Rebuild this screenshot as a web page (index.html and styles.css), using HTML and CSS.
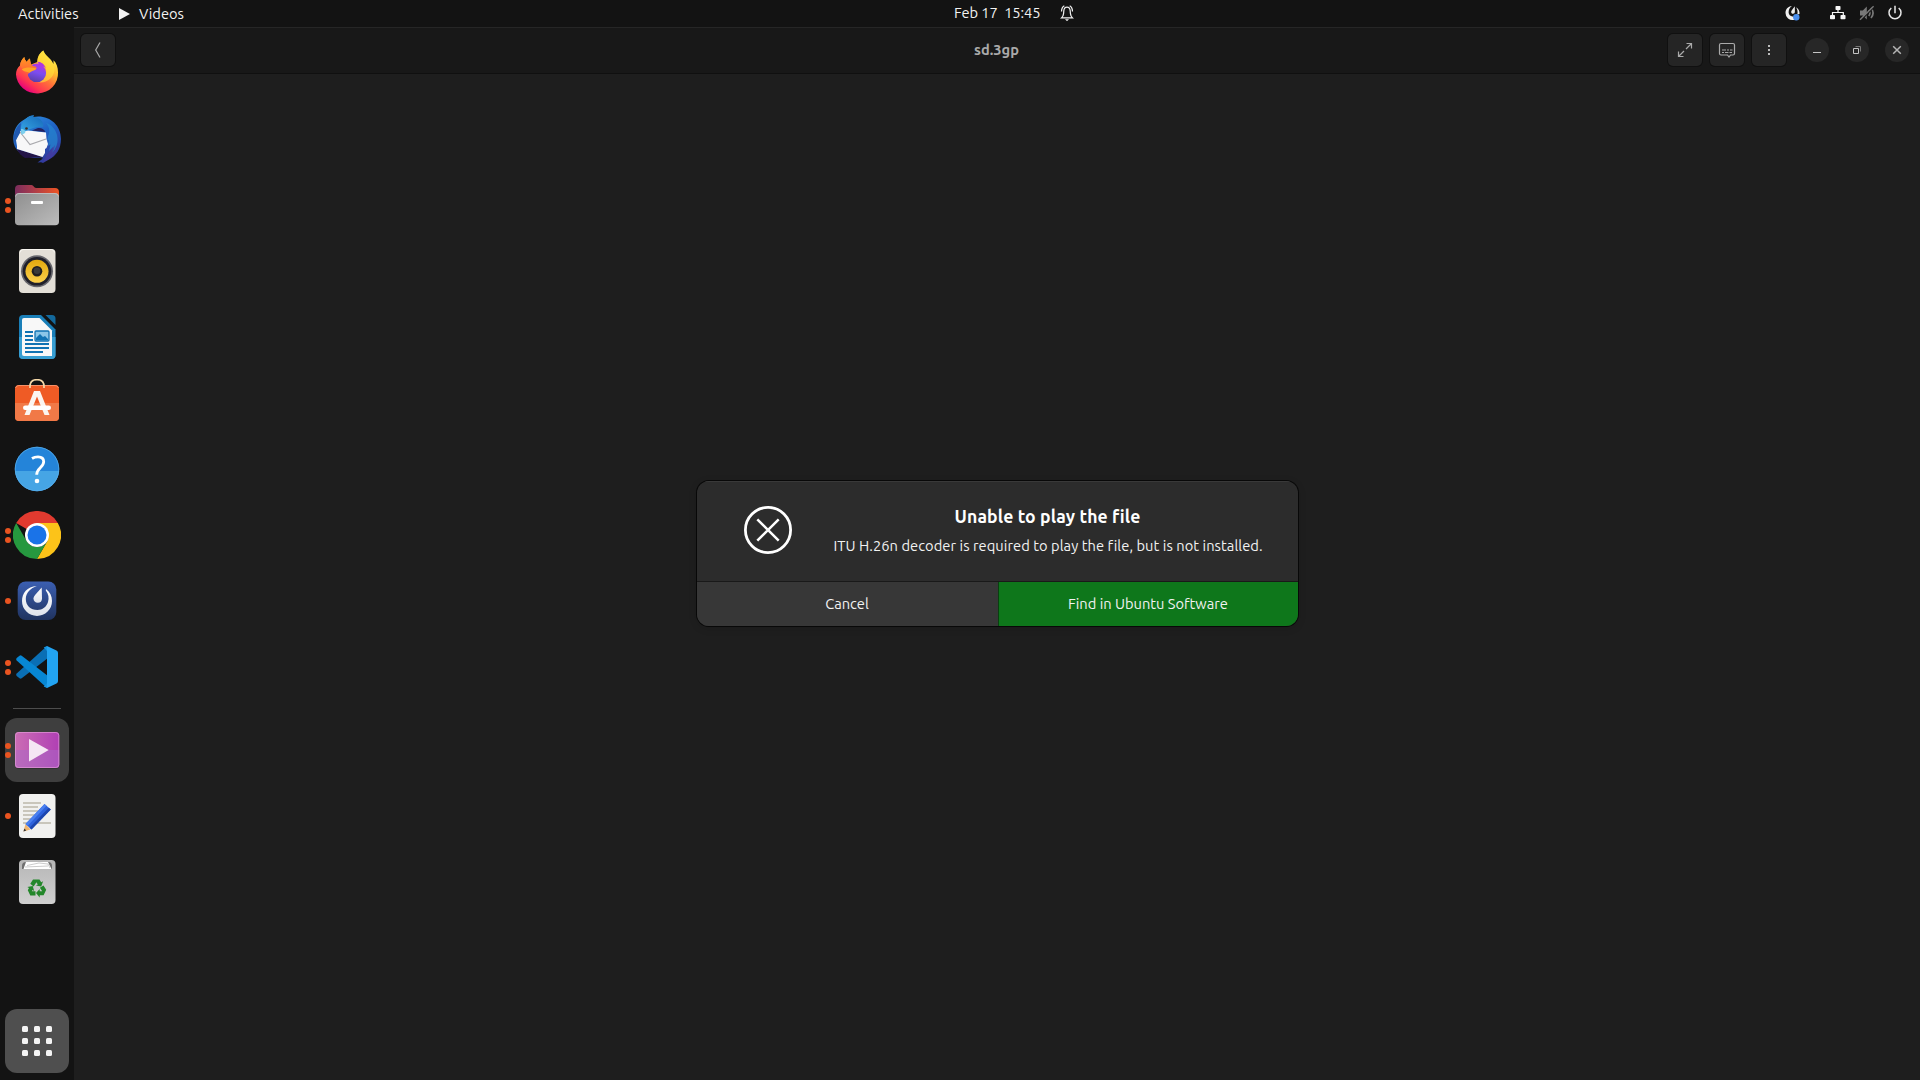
FILE: index.html
```html
<!DOCTYPE html>
<html lang="en">
<head>
<meta charset="utf-8">
<title>Videos</title>
<link rel="stylesheet" href="styles.css">
</head>
<body>
<div class="desktop">
  <header class="topbar">
    <div class="topbar-left">
      <span class="activities">Activities</span>
      <span class="app-menu">
        <svg width="11" height="12" viewBox="0 0 11 12"><path d="M0 0 11 6 0 12z" fill="#f2f2f2"/></svg>
        <span class="app-name">Videos</span>
      </span>
    </div>
    <div class="clock">
      <span class="clock-text">Feb 17&nbsp; 15:45</span>
      <svg width="14" height="16" viewBox="0 0 14 16" fill="none" stroke="#f2f2f2" stroke-width="1.200">
        <path d="M1.500 12.900c1-.9 1.900-2 2.100-4.500l.2-2.500C4 3.500 5.300 2.200 7 2.200s3 1.300 3.200 3.700l.2 2.500c.2 2.500 1.100 3.600 2.100 4.500z"/>
        <path d="M1.500 6.500C1.600 3.800 2.500 1.600 4.300.7M12.500 6.500C12.400 3.800 11.500 1.600 9.700.7"/>
        <path d="M5 14.200h4L7 16.200z" fill="#f2f2f2" stroke="none"/>
      </svg>
    </div>
    <div class="tray">
      <svg class="tray-chat" width="16" height="16" viewBox="0 0 16 16">
        <path d="M7 1C2.800 1.200.5 4.500.5 8a7 7 0 0 0 8.500 6.900L12 11C7.500 12.800 3.600 11 3.600 7.300 3.600 4.500 5 2.200 7 1z" fill="#f0f0f0"/>
        <path d="M11 2.200C13.500 3.500 14.800 6 14.500 9l-2.200.5C13 7 12.500 4.500 11 2.200z" fill="#f0f0f0"/>
        <path d="M9.800 1.300 9.900 6.600C9.900 8 9.200 8.800 8.100 8.800 6.900 8.800 6.200 7.900 6.200 6.900 6.200 6 6.700 5.400 7.200 4.800z" fill="#f0f0f0"/>
        <circle cx="11.300" cy="12.200" r="3.200" fill="#4a90f0"/>
      </svg>
      <svg class="tray-net" width="16" height="14" viewBox="0 0 16 14">
        <g fill="#f7f7f7"><rect x="5.500" y="0" width="5" height="4" rx=".8"/><rect x="0" y="9" width="5" height="4.200" rx=".8"/><rect x="10.500" y="9" width="5" height="4.200" rx=".8"/></g>
        <path d="M8 3v3.500M2.500 9.500v-3h10.800v3" fill="none" stroke="#f7f7f7" stroke-width="1.200"/>
      </svg>
      <svg class="tray-vol" width="16" height="16" viewBox="0 0 16 16">
        <path d="M1 5.500h2.800l4-4v13l-4-4H1z" fill="#787878"/>
        <path d="M9.800 5c1.300 1.800 1.300 4.200 0 6M12 3c2.500 3 2.500 7 0 10" fill="none" stroke="#787878" stroke-width="1.700"/>
        <path d="M1.800 15.200 15 2" stroke="#131313" stroke-width="1.500"/><path d="M1 14.800 14.600 1.200" stroke="#787878" stroke-width="1.400"/>
      </svg>
      <svg class="tray-power" width="16" height="16" viewBox="0 0 16 16" fill="none" stroke="#e8e8e8" stroke-width="1.500">
        <path d="M8 .8v7.400M4.300 3A6 6 0 1 0 11.700 3"/>
      </svg>
    </div>
  </header>

  <div class="workspace">
    <nav class="dock">
      <div class="dock-item">
        <svg class="app-icon" viewBox="0 0 48 48">
          <defs>
            <linearGradient id="ffBody" x1=".85" y1=".1" x2=".25" y2=".95"><stop offset="0" stop-color="#fff44f"/><stop offset=".3" stop-color="#ffbd2e"/><stop offset=".55" stop-color="#ff7139"/><stop offset=".8" stop-color="#ff3750"/><stop offset="1" stop-color="#e5007d"/></linearGradient>
            <linearGradient id="ffGlobe" x1=".7" y1="0" x2=".4" y2="1"><stop offset="0" stop-color="#b833e1"/><stop offset=".5" stop-color="#7b4df0"/><stop offset="1" stop-color="#5a3fa8"/></linearGradient>
            <linearGradient id="ffHead" x1="0" y1="0" x2="0" y2="1"><stop offset="0" stop-color="#ff9a1f"/><stop offset="1" stop-color="#ff5a3c"/></linearGradient>
          </defs>
          <path d="M30.300 1.500C25.500 5 24.500 9 24.300 13L18 15.500C17.500 13.500 17 11 17 9.500 15.500 10.500 14.500 11.500 13.800 13 12.500 11.500 11.500 10 11.300 8 8.500 10.500 7.500 13 7 16.500 4 19 3 22 3 25.500A21 20 0 0 0 45 23.500C45 18 43.500 14 40.500 11.200V15C38 9 32 6.500 30.300 1.500z" fill="url(#ffBody)"/>
          <path d="M30.300 1.500C25.500 5 24.500 9 24.300 13 31 14 34 18 33 24 32.500 29 29 32.500 24 33c9 2 17-4 17.500-12C41.500 12 32.500 9 30.300 1.500z" fill="#ffdf3a" opacity=".65"/>
          <circle cx="23.800" cy="23.800" r="9.300" fill="url(#ffGlobe)"/>
          <path d="M24.500 12.800C29 13 31 15.500 33 19 30 16.500 28 17 27 17.500z" fill="#ad35e2"/>
          <path d="M7 16.500C7.500 13 8.500 10.500 11.300 8c.2 2 1.200 3.500 2.500 5C14.500 11.500 15.500 10.500 17 9.500c0 2 .5 4.500 1.500 6.500 1.500 2 5.500.500 5 3.500-.8 1.800-4.500 1.800-6 3.300C16 24 15.500 25 14.500 25.500 11 23 9 20 7 16.500z" fill="url(#ffHead)"/>
          <path d="M8.700 20.500C12 18 18 18 23.400 19.500 22.500 21.500 18.500 21.500 16.800 23.800 13 22.500 11 22.500 8.700 20.500z" fill="#ffa426"/>
        </svg>
      </div>
      <div class="dock-item">
        <svg class="app-icon" viewBox="0 0 48 48">
          <defs><linearGradient id="tbBody" x1=".2" y1="0" x2=".7" y2="1"><stop offset="0" stop-color="#2f8fe0"/><stop offset=".45" stop-color="#1f62c4"/><stop offset="1" stop-color="#31379a"/></linearGradient>
          <linearGradient id="tbHead" x1="1" y1="0" x2="0" y2="1"><stop offset="0" stop-color="#1667b8"/><stop offset="1" stop-color="#37a9e6"/></linearGradient></defs>
          <path d="M17 1 21 .3 20 2C35-1 48 9 48 24c0 10-5 17-12 20.500L30 48l-2-.7-3.500.2 5.500-4C15 44 3 39 .7 28-1 18 3 9 10.500 5z" fill="url(#tbBody)"/>
          <path d="M4 34 30 42 12 43C8.500 41 5.500 38 4 34z" fill="#231447"/>
          <path d="M30 42.500 11 43.500 14 47H24z" fill="#131313"/>
          <path d="M7 16 15 15.500 33 17.500 33.500 24 35 29 33.500 33 32 34 32 38 29.500 42 4 34 4 31 3 25z" fill="#f7f7f8"/>
          <path d="M7 17 17 29.500 33 24" fill="none" stroke="#a9a9ad" stroke-width="1.200"/>
          <path d="M3 32 .5 24C1 16 5 10 8 8L7 18 3 25z" fill="#2059b0"/>
          <path d="M33 8C37 13 37 17 35 21l-1 5 2-1-1 6 2.500-1.500L36 36l4-4-1 6c4-4 6-10 5.500-15C44 15 38 9 33 8z" fill="#2584cf" opacity=".75"/>
          <path d="M34 40 42 30 40 38 45 31C44 38 39 44 30 47z" fill="#473aa0" opacity=".7"/>
          <path d="M8 18C7 11 10 4 17 1l4-.7L20 2C28 2 31 8 30 12 25 11 19 13 13 16z" fill="url(#tbHead)"/>
          <path d="M25 13C28 12.500 31 14 32.500 17l-9.500-1-4-.5z" fill="#23205f"/>
          <path d="M8 14C11 14 13 16 12 18L8.500 20z" fill="#7ed0ee"/>
          <circle cx="13.500" cy="13.500" r="1.300" fill="#3a2a22"/>
        </svg>
      </div>
      <div class="dock-item">
        <span class="running"><i></i><i></i></span>
        <svg class="app-icon" viewBox="0 0 48 48">
          <defs><linearGradient id="flBack" x1="0" y1="0" x2="1" y2="0"><stop offset="0" stop-color="#7a2d5c"/><stop offset=".4" stop-color="#a93b4c"/><stop offset="1" stop-color="#ee5523"/></linearGradient>
          <linearGradient id="flFront" x1="0" y1="0" x2="1" y2="1"><stop offset="0" stop-color="#8f8f8f"/><stop offset="1" stop-color="#bcbcbc"/></linearGradient></defs>
          <path d="M2 8a4 4 0 0 1 4-4h12.500c2 0 2.500 3 4.500 3h19a4 4 0 0 1 4 4v12H2z" fill="url(#flBack)"/>
          <rect x="2" y="12.200" width="44" height="32" rx="3.800" fill="url(#flFront)"/>
          <path d="M2.500 15.500a3.300 3.300 0 0 1 3.500-3h36a3.300 3.300 0 0 1 3.500 3" fill="none" stroke="#c2c2c2" stroke-width=".9"/>
          <rect x="18" y="20" width="12" height="3" rx="1" fill="#fff"/>
        </svg>
      </div>
      <div class="dock-item">
        <svg class="app-icon" viewBox="0 0 48 48">
          <defs><linearGradient id="rbCone" x1="0" y1="0" x2="0" y2="1"><stop offset="0" stop-color="#e3a90e"/><stop offset="1" stop-color="#fcd04c"/></linearGradient></defs>
          <rect x="6" y="2" width="36.500" height="44" rx="4" fill="#e3dfd7"/>
          <path d="M7 5.500a3.500 3.500 0 0 1 3-3h28.500a3.500 3.500 0 0 1 3 3" fill="none" stroke="#f8f6f1"/>
          <circle cx="24" cy="24.300" r="16" fill="#66666c"/><circle cx="24" cy="24.300" r="14.300" fill="#20202a"/>
          <circle cx="24" cy="24.300" r="11.500" fill="url(#rbCone)"/>
          <circle cx="24" cy="24.300" r="5.300" fill="#211f20"/><circle cx="24" cy="23.800" r="3.300" fill="#3a3a3a"/>
        </svg>
      </div>
      <div class="dock-item">
        <svg class="app-icon" viewBox="0 0 48 48">
          <path d="M10 2h18l14.500 14.500V42a4 4 0 0 1-4 4H10a4 4 0 0 1-4-4V6a4 4 0 0 1 4-4z" fill="#1a7fb8"/>
          <path d="M6 24h36.500v18a4 4 0 0 1-4 4H10a4 4 0 0 1-4-4z" fill="#379ed2"/>
          <path d="M11 5h15.500L39 17.500V43H11a2 2 0 0 1-2-2V7a2 2 0 0 1 2-2z" fill="#f8f8f8"/>
          <path d="M32.500 2H39a3.500 3.500 0 0 1 3.500 3.500V12z" fill="#13699c"/>
          <path d="M12 19h8M12 23h8M12 27h8M12 31h24M12 35h24M12 39h18" stroke="#1173b3" stroke-width="2.100"/>
          <rect x="22" y="18" width="14" height="10" rx="1" fill="#8bc6e8" stroke="#1173b3" stroke-width="1.300"/>
          <path d="M23 27v-2l4-4 3 3 2-1 3 3v1z" fill="#1173b3"/>
        </svg>
      </div>
      <div class="dock-item">
        <svg class="app-icon" viewBox="0 0 48 48">
          <rect x="2" y="6" width="44" height="36" rx="4" fill="#ef5b25"/>
          <path d="M2 24h44v14a4 4 0 0 1-4 4H6a4 4 0 0 1-4-4z" fill="#f17947"/>
          <path d="M2.500 9A3.500 3.500 0 0 1 6 6.500h36A3.500 3.500 0 0 1 45.500 9" fill="none" stroke="#f79168"/>
          <path d="M17 9V7.500C17 3 20 .7 24 .7s7 2.300 7 6.800V9" fill="none" stroke="#f5d8a8" stroke-width="1.700"/>
          <path d="M21 12h6l9.500 24h-5L24 17.500 16.500 36h-5z" fill="#fbf5f0"/>
          <rect x="10" y="26.500" width="28" height="4.500" rx="2.200" fill="#fff"/>
        </svg>
      </div>
      <div class="dock-item">
        <svg class="app-icon" viewBox="0 0 48 48">
          <circle cx="24" cy="24" r="22.200" fill="#2484d9"/>
          <path d="M2 26h44.200a22.200 22.200 0 0 1-44.200 0z" fill="#46a5e5"/>
          <circle cx="24" cy="24" r="21.800" fill="none" stroke="#5cb0ea" stroke-width=".7"/>
          <path d="M19 13.500C21 12.200 23 11.800 25 11.800c3.700 0 5.700 2.100 5.700 5 0 5.500-7 6-7 13" fill="none" stroke="#fff" stroke-width="2.800"/>
          <circle cx="24" cy="36" r="2.300" fill="#fff"/>
        </svg>
      </div>
      <div class="dock-item">
        <span class="running"><i></i><i></i></span>
        <svg class="app-icon" viewBox="0 0 48 48">
          <path d="M24 24 3.200 12A24 24 0 0 1 44.800 12z" fill="#e13a2f"/>
          <path d="M24 12h20.800A24 24 0 0 1 24 48L34.400 30z" fill="#fcc319"/>
          <path d="M3.200 12 13.600 30A12 12 0 0 0 34.400 30L24 48A24 24 0 0 1 3.200 12z" fill="#26983f"/>
          <circle cx="24" cy="24" r="12" fill="#fff"/><circle cx="24" cy="24" r="9.500" fill="#1a73e8"/>
        </svg>
      </div>
      <div class="dock-item">
        <span class="running"><i></i></span>
        <svg class="app-icon" viewBox="0 0 48 48">
          <defs><linearGradient id="mmBg" x1="0" y1="0" x2="0" y2="1"><stop offset="0" stop-color="#3b5fb2"/><stop offset="1" stop-color="#20335f"/></linearGradient>
          <linearGradient id="mmFg" x1="0" y1="0" x2="0" y2="1"><stop offset="0" stop-color="#fff"/><stop offset="1" stop-color="#dfe3ec"/></linearGradient></defs>
          <rect x="4.700" y="4.500" width="38.600" height="38.600" rx="8" fill="url(#mmBg)"/>
          <path d="M23.800 9C14 9.300 9 16.500 9 24A15 15 0 0 0 39 24c0-5-2-9-6-12l-.2 1.500C35.500 17 36.300 21 35 25 33.500 29.800 29.500 33 24.500 33 17.500 33 12.800 28.500 12.800 22 12.800 16 17.500 11 23.800 9z" fill="url(#mmFg)"/>
          <path d="M28.700 10.500 29 21.500c0 2.700-1.700 4.300-4.200 4.300-2.600 0-4.300-1.700-4.300-4.200 0-1.600.9-2.800 2-4.200z" fill="url(#mmFg)"/>
        </svg>
      </div>
      <div class="dock-item">
        <span class="running"><i></i><i></i></span>
        <svg class="app-icon" viewBox="0 0 48 48">
          <path d="M34 3 3.700 30.500Q2.500 31.700 3.700 33L6.500 35.300Q7.500 36 8.700 35.200L34 15.800z" fill="#0a6fb5"/>
          <path d="M34 45 3.700 17.500Q2.500 16.300 3.700 15L6.500 12.700Q7.500 12 8.700 12.800L34 32.200z" fill="#0787d4"/>
          <path d="M34 3 43.500 7.500Q45 8.200 45 9.800V38.200Q45 39.800 43.500 40.500L34 45z" fill="#22a4f2"/>
          <path d="M34 3V45L30.700 43.500 34 40V8L30.700 4.500z" fill="#1593df"/>
        </svg>
      </div>
      <hr class="dock-separator">
      <div class="dock-item dock-item-active">
        <span class="running"><i></i><i></i></span>
        <svg class="app-icon" viewBox="0 0 48 48">
          <defs><linearGradient id="vdBg" x1="0" y1="0" x2="1" y2="0"><stop offset="0" stop-color="#cb6db4"/><stop offset="1" stop-color="#b03fb4"/></linearGradient></defs>
          <rect x="2" y="7" width="44.500" height="36" rx="4" fill="#222" opacity=".45"/>
          <rect x="2" y="6" width="44.300" height="36" rx="3.500" fill="url(#vdBg)"/>
          <path d="M2 24h44.300v14.500a3.500 3.500 0 0 1-3.500 3.500H5.500A3.500 3.500 0 0 1 2 38.500z" fill="#a969c6" opacity=".5"/>
          <rect x="2.500" y="6.500" width="43.300" height="35" rx="3" fill="none" stroke="#e19ad7" stroke-width=".7"/>
          <path d="M16 13 35.700 24 16 35.500z" fill="#f5e6f4"/>
        </svg>
      </div>
      <div class="dock-item">
        <span class="running"><i></i></span>
        <svg class="app-icon" viewBox="0 0 48 48">
          <rect x="6" y="2" width="36.500" height="44" rx="4" fill="#f1f1ef"/>
          <path d="M10 11h18M10 15h15M10 19h15M10 23h12M10 27h12M10 31h28" stroke="#c9c6bb" stroke-width="2"/>
          <path d="M10.500 39.500 12.500 32 17.500 37.500z" fill="#f0b56f"/><path d="M10.500 39.500l.8-3 2 2.100z" fill="#333"/>
          <path d="M12.500 32 31.500 12 37.800 17.500 18.500 37.500z" fill="#2d62dc"/>
          <path d="M12.500 32 31.500 12 33.500 13.700 14.500 34z" fill="#4a80f0"/><path d="M16.500 35.700 35.800 15.700 37.800 17.500 18.500 37.500z" fill="#1c46ae"/>
        </svg>
      </div>
      <div class="dock-item">
        <svg class="app-icon" viewBox="0 0 48 48">
          <defs><linearGradient id="trBody" x1="0" y1="0" x2="0" y2="1"><stop offset="0" stop-color="#b6b6b6"/><stop offset="1" stop-color="#d0d0d0"/></linearGradient></defs>
          <rect x="6" y="2" width="36.500" height="44" rx="4" fill="url(#trBody)"/>
          <path d="M9 11V8a4 4 0 0 1 4-4h22a4 4 0 0 1 4 4v3z" fill="#707070"/>
          <path d="M10.500 11 13 4h22l3.500 7z" fill="#fff"/>
          <path d="M14 7.500 26 5l9 1 2 4M12 9l23-1" stroke="#b5b5b5" stroke-width=".7" fill="none"/>
          <g fill="#23872a">
            <path d="M17.300 25.800 20 21.500h6.500l1.700 2.800 1.900-1.100-1.900 5.400-5.300-1.100 1.900-1.100-1.400-2.200-2.800 4.300z"/>
            <path d="M30.500 27.500l2.700 4.300-2.600 5.400h-3.900v2.200l-3.700-4.300 3.700-4v2.200h2.500l-2.300-3.600z"/>
            <path d="M22.500 33.200V37.400H17.300L14.800 32.200 16 30 14.300 29l5.400-1.100 1.500 5.100-1.700-1-.7 1.200z"/>
          </g>
        </svg>
      </div>
      <div class="dock-item show-apps">
        <span class="apps-grid"><i></i><i></i><i></i><i></i><i></i><i></i><i></i><i></i><i></i></span>
      </div>
    </nav>

    <main class="window">
      <div class="headerbar">
        <button class="tool-button" aria-label="Back">
          <svg width="16" height="16" viewBox="0 0 16 16" fill="none" stroke="#a9a9a9" stroke-width="1.200"><path d="M10 .5 5.700 8 10 15.500"/></svg>
        </button>
        <h1 class="window-title">sd.3gp</h1>
        <div class="header-actions">
          <button class="tool-button" aria-label="Fullscreen">
            <svg width="16" height="16" viewBox="0 0 16 16" fill="none" stroke="#aaa" stroke-width="1.200"><path d="M9.500 1.500h5v5M14.500 1.500 9 7M6.500 14.500h-5v-5M1.500 14.500 7 9"/></svg>
          </button>
          <button class="tool-button" aria-label="Subtitles">
            <svg width="18" height="16" viewBox="0 0 18 16" fill="none" stroke="#aaa" stroke-width="1.200"><path d="M3 1.500h12Q16.500 1.500 16.500 3v8.500Q16.500 13 15 13h-2.500L11 15 9.500 13H3Q1.500 13 1.500 11.500V3Q1.500 1.500 3 1.500z"/><path d="M4 8h4M9 8h2M12 8h2.500M4 10.500h2M7 10.500h3.500M11.500 10.500H14" stroke-width="1"/></svg>
          </button>
          <button class="tool-button" aria-label="Menu">
            <svg width="16" height="16" viewBox="0 0 16 16" fill="#bbb"><path d="M7 3h2v2H7zM7 7h2v2H7zM7 11h2v2H7z"/></svg>
          </button>
          <div class="window-controls">
            <button class="window-button" aria-label="Minimize"><svg width="16" height="16" viewBox="0 0 16 16"><path d="M4 10h8v1H4z" fill="#c5c5c5"/></svg></button>
            <button class="window-button" aria-label="Restore"><svg width="16" height="16" viewBox="0 0 16 16" fill="none"><path d="M6.500 4.500h5v5" stroke="#777"/><path d="M4.500 6.500h5v5h-5z" stroke="#c5c5c5"/></svg></button>
            <button class="window-button" aria-label="Close"><svg width="16" height="16" viewBox="0 0 16 16"><path d="M4.200 4.200l7.600 7.600M11.800 4.200l-7.600 7.600" stroke="#b5b5b5" stroke-width="1.500"/></svg></button>
          </div>
        </div>
      </div>
      <div class="video-area"></div>

      <div class="modal-layer">
        <section class="dialog" role="alertdialog">
          <div class="dialog-body">
            <svg class="dialog-icon" width="48" height="48" viewBox="0 0 48 48" fill="none" stroke="#fff"><circle cx="24" cy="24" r="22.600" stroke-width="2.800"/><path d="M13.300 13.300l21.400 21.400M34.700 13.300 13.300 34.700" stroke-width="2.500"/></svg>
            <div class="dialog-text">
              <h2 class="dialog-title">Unable to play the file</h2>
              <p class="dialog-message">ITU H.26n decoder is required to play the file, but is not installed.</p>
            </div>
          </div>
          <div class="dialog-actions">
            <button class="dialog-button">Cancel</button>
            <button class="dialog-button dialog-button-suggested">Find in Ubuntu Software</button>
          </div>
        </section>
      </div>
    </main>
  </div>
</div>
</body>
</html>
```
FILE: styles.css
```css
* { box-sizing: border-box; }
body {
  margin: 0;
  background: #131313;
  color: #f2f2f2;
  font: 14.667px/20px Ubuntu, "Noto Sans", sans-serif;
}
svg { display: block; flex: none; }
h1, h2, p { margin: 0; white-space: nowrap; }
button { padding: 0; border: 0; color: inherit; font: inherit; }

.desktop { display: flex; flex-direction: column; width: 1920px; height: 1080px; overflow: hidden; }

.topbar { display: grid; grid-template-columns: 1fr auto 1fr; align-items: center; height: 27px; white-space: nowrap; }
.topbar-left { display: flex; align-items: center; padding-left: 18px; }
.activities { width: 101px; letter-spacing: .05px; }
.app-menu { display: flex; align-items: center; gap: 9px; }
.clock { display: flex; align-items: center; gap: 18px; padding: 0 0 1px 108px; }
.clock-text { width: 88px; letter-spacing: -.1px; }
.tray { display: flex; align-items: center; justify-content: flex-end; padding: 0 17px 1px 0; }
.tray-chat { margin-right: 29px; }
.tray-net { margin-right: 13px; }
.tray-vol { margin-right: 12px; }

.workspace { display: flex; flex: 1; min-height: 0; }

.dock { display: flex; flex-direction: column; align-items: center; gap: 2px; width: 74px; padding: 14px 0 7px; }
.dock-item { position: relative; display: flex; align-items: center; justify-content: center; flex: none; width: 64px; height: 64px; border-radius: 12px; }
.dock-item-active { background: #3e3e3e; }
.app-icon { width: 48px; height: 48px; }
.running { position: absolute; left: 0; top: 0; bottom: 0; display: flex; flex-direction: column; justify-content: center; gap: 3px; }
.running i { width: 6px; height: 6px; border-radius: 50%; background: #ea5420; }
.dock-separator { width: 48px; height: 1px; margin: 7px 0; border: 0; background: #4d4d4d; }
.show-apps { margin-top: auto; background: #4f4f4f; }
.apps-grid { display: grid; grid-template-columns: repeat(3, 6px); gap: 6px; }
.apps-grid i { height: 6px; border-radius: 1.500px; background: #f4f4f4; }

.window { position: relative; display: flex; flex-direction: column; flex: 1; }
.headerbar { display: grid; grid-template-columns: 1fr auto 1fr; align-items: center; height: 47px; padding: 0 11px 1px 7px; border-top: 1px solid #262626; border-bottom: 1px solid #101010; background: #181818; }
.tool-button { display: flex; align-items: center; justify-content: center; width: 34px; height: 32px; border-radius: 5px; background: #252525; box-shadow: 0 0 0 1px #101010; }
.window-title { padding-left: 3px; color: #aaa; font-size: 14.667px; line-height: 20px; }
.header-actions { display: flex; align-items: center; justify-content: flex-end; gap: 8px; }
.window-controls { display: flex; gap: 16px; margin-left: 11px; }
.window-button { display: flex; align-items: center; justify-content: center; width: 24px; height: 24px; border-radius: 50%; background: #272727; }
.video-area { flex: 1; background: #1e1e1e; }

.modal-layer { position: absolute; inset: 0; display: flex; align-items: center; justify-content: center; }
.dialog { width: 601px; height: 145px; overflow: hidden; border-radius: 12px; background: #2c2c2c; box-shadow: 0 0 0 1px #080808, 0 2px 8px rgba(0, 0, 0, .15); }
.dialog-body { display: flex; height: 100px; padding: 24px 0 0 47px; border-top: 1px solid #393939; }
.dialog-text { width: 428px; margin-left: 42px; }
.dialog-title { color: #fff; font-size: 17.600px; line-height: 22px; text-align: center; letter-spacing: .1px; }
.dialog-message { margin-top: 8px; letter-spacing: .06px; }
.dialog-actions { display: grid; grid-template-columns: 301px 1fr; height: 45px; border-top: 1px solid #191919; }
.dialog-button { background: #373737; }
.dialog-button-suggested { border-left: 1px solid #093f10; background: #0e771b; }
```
